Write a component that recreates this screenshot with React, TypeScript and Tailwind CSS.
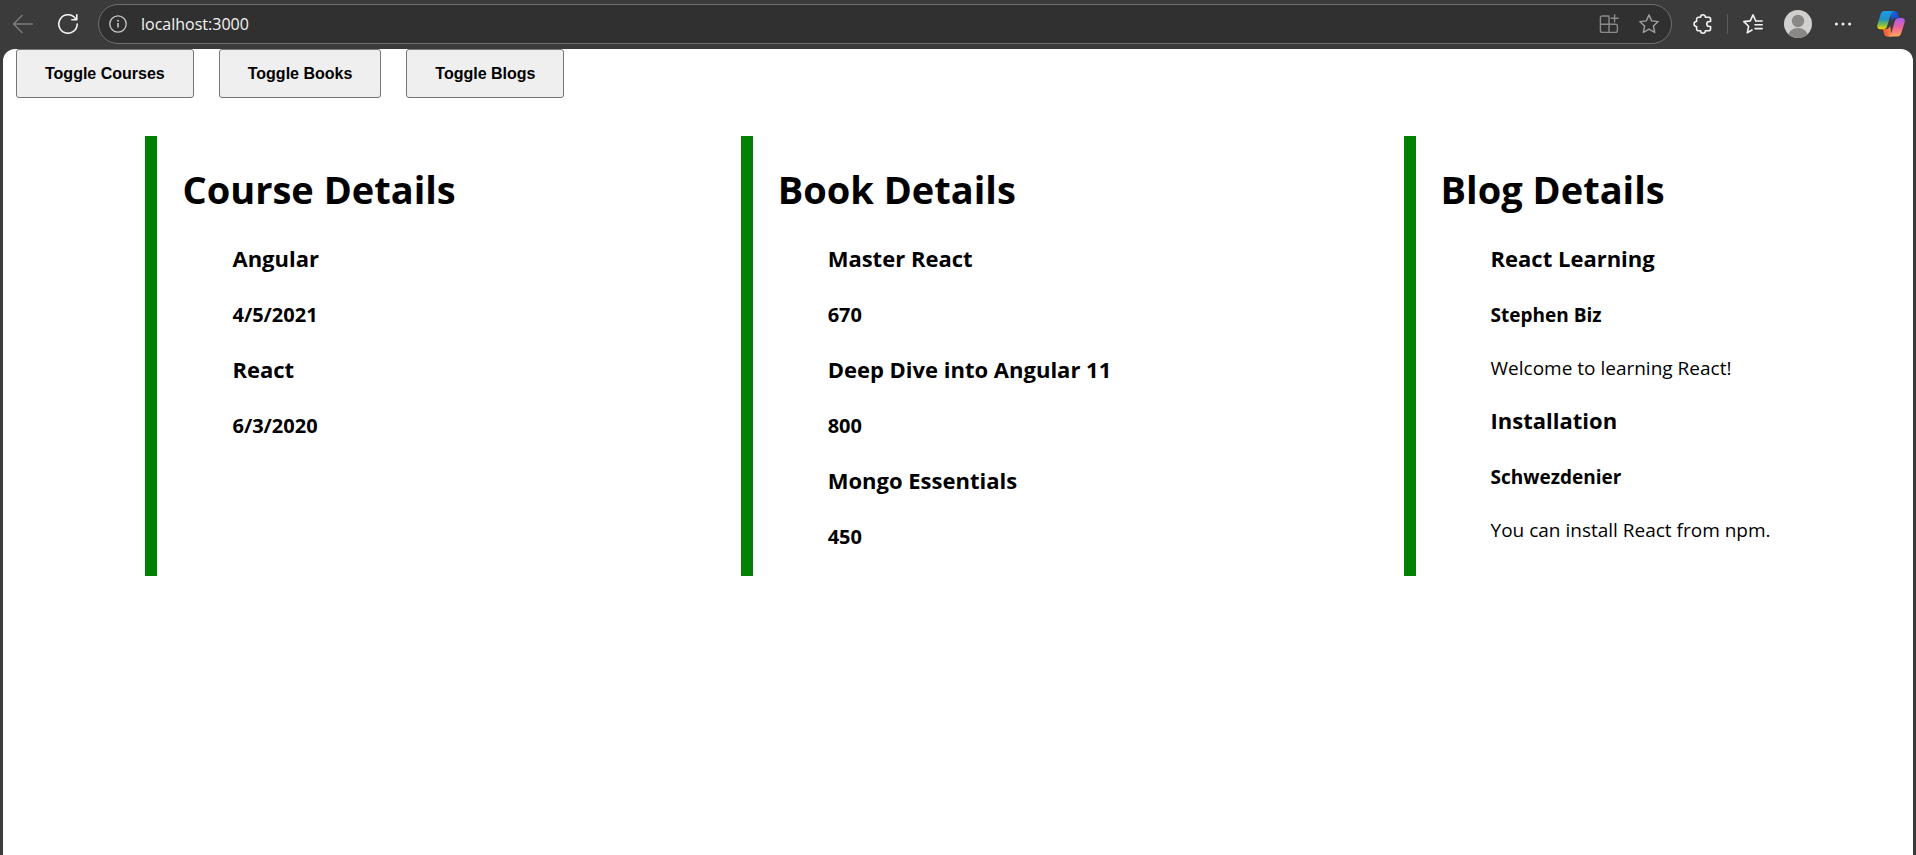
import { useState } from "react";
import type { ReactNode } from "react";

const courses = [
  { id: 1, name: "Angular", date: "4/5/2021" },
  { id: 2, name: "React", date: "6/3/2020" },
];

const books = [
  { id: 1, name: "Master React", price: 670 },
  { id: 2, name: "Deep Dive into Angular 11", price: 800 },
  { id: 3, name: "Mongo Essentials", price: 450 },
];

const blogs = [
  { id: 1, title: "React Learning", author: "Stephen Biz", content: "Welcome to learning React!" },
  { id: 2, title: "Installation", author: "Schwezdenier", content: "You can install React from npm." },
];

function IconButton({ label, className, children }: { label: string; className?: string; children: ReactNode }) {
  return (
    <button type="button" aria-label={label} className={`flex shrink-0 items-center justify-center ${className ?? ""}`}>
      {children}
    </button>
  );
}

function Stroke({ width = 1.4, children }: { width?: number; children: ReactNode }) {
  return (
    <svg
      viewBox="0 0 20 20"
      className="size-5"
      fill="none"
      stroke="currentColor"
      strokeWidth={width}
      strokeLinecap="round"
      strokeLinejoin="round"
      aria-hidden="true"
    >
      {children}
    </svg>
  );
}

function Toolbar() {
  return (
    <header className="flex h-[49px] shrink-0 items-center pr-[10px] pb-[1px] pl-[13px] text-[#f2f2f2]">
      <IconButton label="Back" className="text-[#7c7c7c]">
        <Stroke>
          <path d="M19.5 10H.8M9 1.6.6 10 9 18.4" />
        </Stroke>
      </IconButton>
      <IconButton label="Refresh" className="ml-[25px]">
        <Stroke width={1.6}>
          <path d="M19.2 10A9.2 9.2 0 1 1 17.6 4.8" />
          <path d="M18.8.8v5h-5" />
        </Stroke>
      </IconButton>

      <div className="ml-5 flex h-10 min-w-0 flex-1 items-center rounded-full border border-[#707070] bg-[#303030] pr-3 pl-[10px]">
        <IconButton label="View site information" className="text-[#c8c8c8]">
          <svg viewBox="0 0 18 18" className="size-[18px]" fill="none" stroke="currentColor" strokeWidth="1.3" aria-hidden="true">
            <circle cx="9" cy="9" r="8.2" />
            <path d="M9 8v4.6" strokeWidth="1.6" />
            <circle cx="9" cy="5.8" r="1" fill="currentColor" stroke="none" />
          </svg>
        </IconButton>
        <input
          type="text"
          aria-label="Address"
          defaultValue="localhost:3000"
          className="ml-[14px] min-w-0 flex-1 bg-transparent font-['Open_Sans','Noto_Sans',sans-serif] text-[16px] leading-6 text-[#f4f4f4] outline-none"
        />
        <IconButton label="App available" className="text-[#8a8a8a]">
          <Stroke width={1.4}>
            <path d="M10 2H3.4a2 2 0 0 0-2 2v12.4a2 2 0 0 0 2 2h13a2 2 0 0 0 2-2V12.2a2 2 0 0 0-2-2h-15M10 2v16.4" />
            <path d="M15.6.8v7M12.1 4.300h7" />
          </Stroke>
        </IconButton>
        <IconButton label="Add this page to favorites" className="ml-5 text-[#a0a0a0]">
          <Stroke width={1.4}>
            <path d="m10 .9 2.7 6 6.5.7-4.8 4.4 1.3 6.5L10 15.2l-5.7 3.3 1.3-6.5L.8 7.6l6.5-.7z" />
          </Stroke>
        </IconButton>
      </div>

      <IconButton label="Extensions" className="ml-[21px]">
        <Stroke width={1.6}>
          <path d="M5.6 3.2h2a2.4 2.4 0 0 1 4.8 0h3.2a2 2 0 0 1 2 2v2.3h-1.3a2.5 2.5 0 0 0 0 5h1.3v2.3a2 2 0 0 1-2 2h-3.2a2.4 2.4 0 0 1-4.8 0h-2a2 2 0 0 1-2-2v-2.3a2.5 2.5 0 0 1 0-5V5.2a2 2 0 0 1 2-2z" />
        </Stroke>
      </IconButton>
      <span className="ml-[14px] h-5 w-px shrink-0 bg-[#5c5c5c]" />
      <IconButton label="Favorites" className="ml-[15px]">
        <Stroke width={1.6}>
          <path d="M12.8 7 10 .9 7.3 6.9.8 7.6l4.8 4.7-1.3 6.5L9 16" />
          <path d="M12.8 7h6.4M12 10.8h7.2M12 14.6h7.2" />
        </Stroke>
      </IconButton>
      <IconButton label="Profile" className="ml-[21px]">
        <svg viewBox="0 0 28 28" className="size-7" aria-hidden="true">
          <defs>
            <clipPath id="avatar-disc">
              <circle cx="14" cy="14" r="14" />
            </clipPath>
          </defs>
          <g clipPath="url(#avatar-disc)">
            <rect width="28" height="28" fill="#d2d0ce" />
            <circle cx="14" cy="11" r="6.2" fill="#8a8886" />
            <ellipse cx="14" cy="26.5" rx="10" ry="8.5" fill="#8a8886" />
          </g>
        </svg>
      </IconButton>
      <IconButton label="Settings and more" className="ml-[21px]">
        <svg viewBox="0 0 20 20" className="size-5" fill="currentColor" aria-hidden="true">
          <circle cx="3.4" cy="10" r="1.5" />
          <circle cx="10" cy="10" r="1.5" />
          <circle cx="16.6" cy="10" r="1.5" />
        </svg>
      </IconButton>
      <IconButton label="Copilot" className="ml-[23px]">
        <svg viewBox="0 0 30 28" className="h-7 w-[30px]" aria-hidden="true">
          <defs>
            <linearGradient id="cp-left" x1="0" y1="0" x2="0" y2="1">
              <stop offset="0" stopColor="#1f9cf0" />
              <stop offset=".45" stopColor="#1f8fc0" />
              <stop offset=".75" stopColor="#7bbd4a" />
              <stop offset="1" stopColor="#ffd500" />
            </linearGradient>
            <linearGradient id="cp-right" x1="0" y1="0" x2="0" y2="1">
              <stop offset="0" stopColor="#a45cf2" />
              <stop offset=".5" stopColor="#f0609a" />
              <stop offset="1" stopColor="#ffa95c" />
            </linearGradient>
            <linearGradient id="cp-top" x1="0" y1="0" x2="1" y2="1">
              <stop offset="0" stopColor="#1a6fe0" />
              <stop offset="1" stopColor="#1537c8" />
            </linearGradient>
            <linearGradient id="cp-bottom" x1="0" y1="0" x2="1" y2="0">
              <stop offset="0" stopColor="#f0502c" />
              <stop offset="1" stopColor="#ff8a50" />
            </linearGradient>
          </defs>
          <path d="M14 1h4.5c2 0 3 1.2 3.5 3l1.2 4H20c-2.5 0-3.5 1.2-4.2 3.4z" fill="url(#cp-top)" />
          <path d="M15.5 26.5h-4c-2 0-3-1.2-3.5-3L6.8 19H10c2.5 0 3.5-1.2 4.2-3.4z" fill="url(#cp-bottom)" />
          <path d="M8.8 1H18c-1.8.2-2.7 1.4-3.2 3.2L11.2 16c-.7 2.2-2 3.3-4.2 3.3H4.2C1.7 19.3.7 17.2 1.4 14.8L4.6 4.3C5.3 2.2 6.6 1 8.8 1z" fill="url(#cp-left)" />
          <path d="M21 26.5h-9c1.8-.2 2.7-1.4 3.2-3.2l3.6-12c.7-2.2 2-3.3 4.2-3.3h2.8c2.5 0 3.5 2.1 2.8 4.5l-3.4 10.7c-.7 2.1-2 3.3-4.2 3.3z" fill="url(#cp-right)" />
        </svg>
      </IconButton>
    </header>
  );
}

function ToggleButton({ pressed, onClick, children }: { pressed: boolean; onClick: () => void; children: ReactNode }) {
  return (
    <button
      type="button"
      aria-pressed={pressed}
      onClick={onClick}
      className="rounded-[3px] border border-[#767676] bg-[#efefef] px-7 py-3 font-['Liberation_Sans',Arial,sans-serif] text-[16px] leading-[23px] font-bold text-black"
    >
      {children}
    </button>
  );
}

function Panel({ title, className, children }: { title: string; className: string; children: ReactNode }) {
  return (
    <section className={`border-l-12 border-[#008000] pt-[27px] pb-[25px] pl-[25px] whitespace-nowrap ${className}`}>
      <h1 className="mb-[27px] text-[38px] leading-[53px] font-bold">{title}</h1>
      <div className="pl-[50px]">{children}</div>
    </section>
  );
}

const itemTitle = "mb-[27px] text-[22px] leading-[31px] font-bold";
const itemFigure = "text-[20px] leading-7 font-bold";
const itemAuthor = "text-[19px] leading-7 font-bold";

export default function App() {
  const [showCourses, setShowCourses] = useState(true);
  const [showBooks, setShowBooks] = useState(true);
  const [showBlogs, setShowBlogs] = useState(true);

  return (
    <div className="flex min-h-screen flex-col bg-[#3b3b3b]">
      <Toolbar />
      <main className="mx-[3px] flex-1 rounded-t-xl bg-white font-['Open_Sans','Noto_Sans',sans-serif] text-black">
        <div className="flex gap-[25px] pl-[13px]">
          <ToggleButton pressed={showCourses} onClick={() => setShowCourses(!showCourses)}>
            Toggle Courses
          </ToggleButton>
          <ToggleButton pressed={showBooks} onClick={() => setShowBooks(!showBooks)}>
            Toggle Books
          </ToggleButton>
          <ToggleButton pressed={showBlogs} onClick={() => setShowBlogs(!showBlogs)}>
            Toggle Blogs
          </ToggleButton>
        </div>

        <div className="mt-[38px] flex justify-around">
          {showCourses && (
            <Panel title="Course Details" className="basis-[305px]">
              <ul className="flex flex-col gap-[25px]">
                {courses.map((course) => (
                  <li key={course.id}>
                    <h3 className={itemTitle}>{course.name}</h3>
                    <h4 className={itemFigure}>{course.date}</h4>
                  </li>
                ))}
              </ul>
            </Panel>
          )}
          {showBooks && (
            <Panel title="Book Details" className="basis-[378px]">
              <ul className="flex flex-col gap-[25px]">
                {books.map((book) => (
                  <li key={book.id}>
                    <h3 className={itemTitle}>{book.name}</h3>
                    <h4 className={itemFigure}>{book.price}</h4>
                  </li>
                ))}
              </ul>
            </Panel>
          )}
          {showBlogs && (
            <Panel title="Blog Details" className="basis-[363px]">
              <ul className="flex flex-col gap-6">
                {blogs.map((blog) => (
                  <li key={blog.id}>
                    <h3 className={itemTitle}>{blog.title}</h3>
                    <h4 className={itemAuthor}>{blog.author}</h4>
                    <p className="mt-[26px] text-[19px] leading-[26px]">{blog.content}</p>
                  </li>
                ))}
              </ul>
            </Panel>
          )}
        </div>
      </main>
    </div>
  );
}
